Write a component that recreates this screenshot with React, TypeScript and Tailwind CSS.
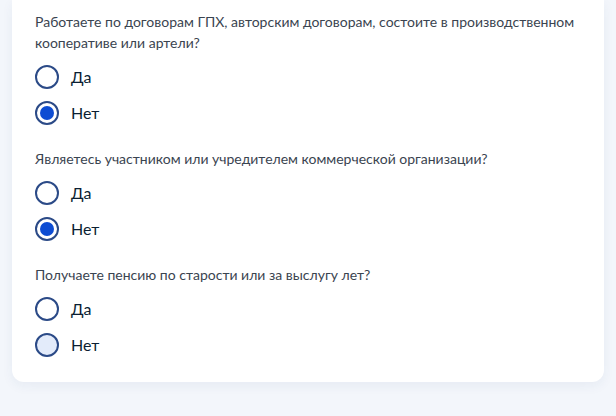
const questions = [
  {
    text: 'Работаете по договорам ГПХ, авторским договорам, состоите в производственном кооперативе или артели?',
    value: 'no',
  },
  {
    text: 'Являетесь участником или учредителем коммерческой организации?',
    value: 'no',
  },
  {
    text: 'Получаете пенсию по старости или за выслугу лет?',
    value: null,
    hover: true,
  },
];

function Radio({ checked, hover }: { checked: boolean; hover?: boolean }) {
  return (
    <span
      className={
        'flex h-6 w-6 items-center justify-center rounded-full border-2 border-[#2b4a87] ' +
        (hover ? 'bg-[#e3ebfa]' : 'bg-white')
      }
    >
      {checked && <span className="h-[14px] w-[14px] rounded-full bg-[#0d4cd3]" />}
    </span>
  );
}

export default function App() {
  return (
    <div
      className="h-[416px] w-[616px] overflow-hidden bg-[#f3f6fb] px-3"
      style={{ fontFamily: 'Lato, "Noto Sans", sans-serif' }}
    >
      <div className="rounded-b-xl bg-white pl-[23px] pr-4 pt-[11px] pb-[25px] shadow-[0_4px_12px_rgba(30,60,120,0.06)]">
        {questions.map((q, i) => (
          <div key={i} className={i > 0 ? 'mt-[23px]' : ''}>
            <p className="text-[14px] leading-[21px] text-[#3a4450]">{q.text}</p>
            <div className="mt-3 flex flex-col gap-3">
              {[
                { key: 'yes', label: 'Да' },
                { key: 'no', label: 'Нет' },
              ].map(o => (
                <label key={o.key} className="flex h-6 items-center gap-3">
                  <Radio checked={q.value === o.key} hover={q.hover && o.key === 'no'} />
                  <span className="text-[16px] leading-6 text-[#0b1f33]">{o.label}</span>
                </label>
              ))}
            </div>
          </div>
        ))}
      </div>
    </div>
  );
}
